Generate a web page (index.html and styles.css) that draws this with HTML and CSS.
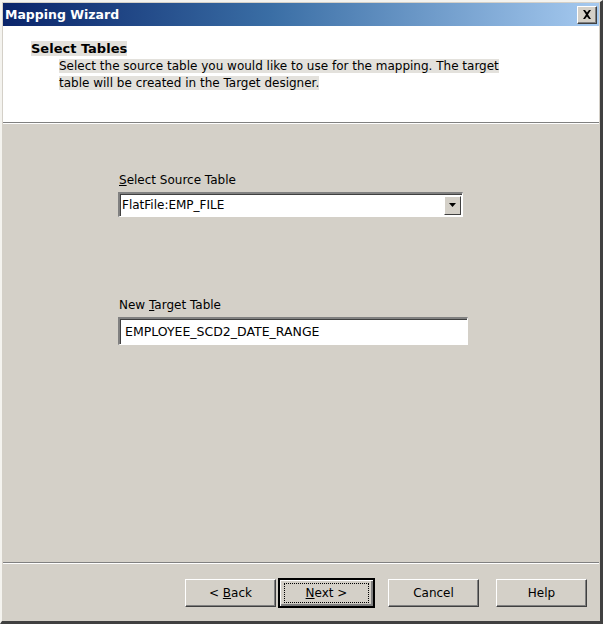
FILE: index.html
```html
<!DOCTYPE html>
<html lang="en">
<head>
    <meta charset="UTF-8">
    <title>Mapping Wizard</title>
    <link rel="stylesheet" href="styles.css">
</head>
<body>
    <div class="ventana">
        <div class="titulo">
            <span class="titulo-texto">Mapping Wizard</span>
            <span class="cerrar">
                <svg width="10" height="9" viewBox="0 0 10 9"><path d="M1 0h2l2 2.5L7 0h2L6 4.5 9 9H7L5 6.5 3 9H1l3-4.5z" fill="#000"/></svg>
            </span>
        </div>

        <div class="cabecera">
            <h1><span class="marca">Select Tables</span></h1>
            <p class="descripcion"><span class="marca">Select the source table you would like to use for the mapping. The target</span><br><span class="marca">table will be created in the Target designer.</span></p>
        </div>

        <div class="cuerpo">
            <div class="campo campo-fuente">
                <label><u>S</u>elect Source Table</label>
                <div class="combo">
                    <span class="combo-valor">FlatFile:EMP_FILE</span>
                    <span class="combo-flecha">
                        <svg width="7" height="4" viewBox="0 0 7 4"><path d="M0 0h7L3.5 4z" fill="#000"/></svg>
                    </span>
                </div>
            </div>

            <div class="campo campo-destino">
                <label>New <u>T</u>arget Table</label>
                <div class="texto">EMPLOYEE_SCD2_DATE_RANGE</div>
            </div>
        </div>

        <div class="pie">
            <div class="boton"><span>&lt; <u>B</u>ack</span></div>
            <div class="boton boton-defecto"><span class="foco"><span><u>N</u>ext &gt;</span></span></div>
            <div class="boton boton-separado"><span>Cancel</span></div>
            <div class="boton"><span>Help</span></div>
        </div>
    </div>
</body>
</html>
```

FILE: styles.css
```css
:root {
    --gris: #d4d0c8;
    --sombra: #808080;
    --oscuro: #404040;
}

* {
    margin: 0;
    padding: 0;
    box-sizing: border-box;
}

body {
    width: 603px;
    height: 624px;
    font-family: "DejaVu Sans", Tahoma, sans-serif;
    font-size: 12px;
    color: #000;
    background: var(--gris);
    overflow: hidden;
}

.ventana {
    width: 603px;
    height: 624px;
    display: flex;
    flex-direction: column;
    background: var(--gris);
    border-top: 2px solid #f4f3ef;
    border-left: 2px solid #f4f3ef;
    border-right: 3px solid var(--oscuro);
    border-bottom: 3px solid var(--oscuro);
    padding: 1px;
}

.titulo {
    height: 23px;
    display: flex;
    align-items: center;
    justify-content: space-between;
    padding: 0 2px 0 2px;
    background: linear-gradient(to right, #0a246a 0%, #3a6ea5 45%, #a6caf0 100%);
}

.titulo-texto {
    color: #fff;
    font-weight: bold;
    font-size: 12.5px;
}

.cerrar {
    width: 20px;
    height: 18px;
    display: flex;
    align-items: center;
    justify-content: center;
    background: var(--gris);
    border-top: 1px solid #fff;
    border-left: 1px solid #fff;
    border-right: 1px solid var(--oscuro);
    border-bottom: 1px solid var(--oscuro);
    box-shadow: inset -1px -1px 0 var(--sombra);
}

.cabecera {
    height: 97px;
    background: #fff;
    padding: 14px 0 0 28px;
    border-bottom: 1px solid var(--sombra);
    box-shadow: 0 1px 0 #fff;
}

.marca {
    background: #e3e1dc;
}

h1 {
    font-size: 13px;
    font-weight: bold;
    line-height: 18px;
}

.descripcion {
    margin-left: 28px;
    line-height: 17px;
    font-size: 12px;
}

.cuerpo {
    flex: 1;
    padding: 49px 0 0 115px;
    border-bottom: 1px solid var(--sombra);
}

.campo label {
    display: block;
    line-height: 16px;
    margin-bottom: 4px;
    padding-left: 1px;
}

.campo-destino {
    margin-top: 80px;
}

.combo, .texto {
    height: 25px;
    background: #fff;
    border-top: 2px solid var(--sombra);
    border-left: 2px solid var(--sombra);
    border-right: 1px solid #fff;
    border-bottom: 1px solid #fff;
    box-shadow: inset 1px 1px 0 var(--oscuro);
    display: flex;
    align-items: center;
}

.combo {
    width: 345px;
}

.combo-valor {
    flex: 1;
    padding-left: 2px;
}

.combo-flecha {
    width: 17px;
    height: 19px;
    margin-right: 1px;
    display: flex;
    align-items: center;
    justify-content: center;
    background: var(--gris);
    border-top: 1px solid #fff;
    border-left: 1px solid #fff;
    border-right: 1px solid var(--oscuro);
    border-bottom: 1px solid var(--oscuro);
}

.texto {
    width: 350px;
    height: 28px;
    padding-left: 5px;
    font-size: 12.5px;
}

.pie {
    height: 57px;
    border-top: 1px solid #fff;
    display: flex;
    align-items: flex-start;
    padding: 15px 0 0 182px;
    gap: 3px;
}

.boton {
    width: 91px;
    height: 28px;
    display: flex;
    align-items: center;
    justify-content: center;
    background: var(--gris);
    border-top: 1px solid #fff;
    border-left: 1px solid #fff;
    border-right: 1px solid var(--oscuro);
    border-bottom: 1px solid var(--oscuro);
    box-shadow: inset -1px -1px 0 var(--sombra);
}

.boton-defecto {
    width: 95px;
    outline: 1px solid #000;
    border: 1px solid #000;
    box-shadow: inset 1px 1px 0 #fff, inset -2px -2px 0 var(--sombra);
}

.foco {
    width: 85px;
    height: 20px;
    display: flex;
    align-items: center;
    justify-content: center;
    border: 1px dotted #000;
}

.boton-separado {
    margin-left: 11px;
    margin-right: 14px;
}
```
